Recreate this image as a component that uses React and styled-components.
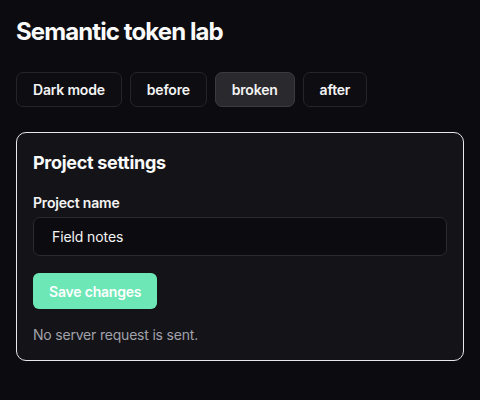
import React from "react";
import styled, { createGlobalStyle } from "styled-components";

const Global = createGlobalStyle`
  html, body { margin: 0; background: #0c0c10; }
  body { font-family: Inter, "Noto Sans", sans-serif; color: #f4f4f5; }
`;

const Page = styled.div`
  padding: 16px;
  display: flex;
  flex-direction: column;
`;

const Title = styled.h1`
  margin: 0;
  font-size: 24px;
  line-height: 32px;
  font-weight: 700;
  letter-spacing: -0.9px;
  color: #fafafa;
`;

const Toolbar = styled.div`
  display: flex;
  gap: 8px;
  margin-top: 24px;
`;

const ToggleButton = styled.button`
  font-family: inherit;
  font-size: 14px;
  font-weight: 600;
  letter-spacing: -0.2px;
  color: #f4f4f5;
  height: 35px;
  padding: 0 16px;
  border-radius: 7px;
  border: 1px solid ${(p) => (p.$active ? "#3a3a40" : "#25252a")};
  background: ${(p) => (p.$active ? "#2a2a2e" : "#0e0e12")};
`;

const Card = styled.section`
  margin-top: 25px;
  border: 1px solid #e8e8ea;
  border-radius: 10px;
  background: #141418;
  padding: 16px 16px 15px;
  display: flex;
  flex-direction: column;
  align-items: flex-start;
`;

const CardTitle = styled.h2`
  margin: 0;
  font-size: 18px;
  line-height: 27px;
  font-weight: 700;
  letter-spacing: -0.3px;
  color: #fafafa;
`;

const Label = styled.label`
  margin-top: 17px;
  font-size: 14px;
  line-height: 20px;
  font-weight: 600;
  letter-spacing: -0.2px;
  color: #f4f4f5;
`;

const Input = styled.input`
  margin-top: 4px;
  box-sizing: border-box;
  width: 100%;
  height: 39px;
  padding: 0 18px;
  border-radius: 7px;
  border: 1px solid #2a2a2f;
  background: #0c0c10;
  color: #f4f4f5;
  font-family: inherit;
  font-size: 14px;
  letter-spacing: -0.1px;
  outline: none;
`;

const PrimaryButton = styled.button`
  margin-top: 17px;
  height: 36px;
  padding: 0 16px;
  border: none;
  border-radius: 6px;
  background: #6ee7b7;
  color: #ffffff;
  font-family: inherit;
  font-size: 14px;
  font-weight: 600;
  letter-spacing: -0.2px;
`;

const Note = styled.p`
  margin: 16px 0 0;
  font-size: 14px;
  line-height: 20px;
  letter-spacing: -0.2px;
  color: #a1a1aa;
`;

export default function App() {
  const modes = ["Dark mode", "before", "broken", "after"];
  return (
    <>
      <Global />
      <Page>
        <Title>Semantic token lab</Title>
        <Toolbar>
          {modes.map((m) => (
            <ToggleButton key={m} $active={m === "broken"}>
              {m}
            </ToggleButton>
          ))}
        </Toolbar>
        <Card>
          <CardTitle>Project settings</CardTitle>
          <Label htmlFor="pn">Project name</Label>
          <Input id="pn" defaultValue="Field notes" />
          <PrimaryButton>Save changes</PrimaryButton>
          <Note>No server request is sent.</Note>
        </Card>
      </Page>
    </>
  );
}
